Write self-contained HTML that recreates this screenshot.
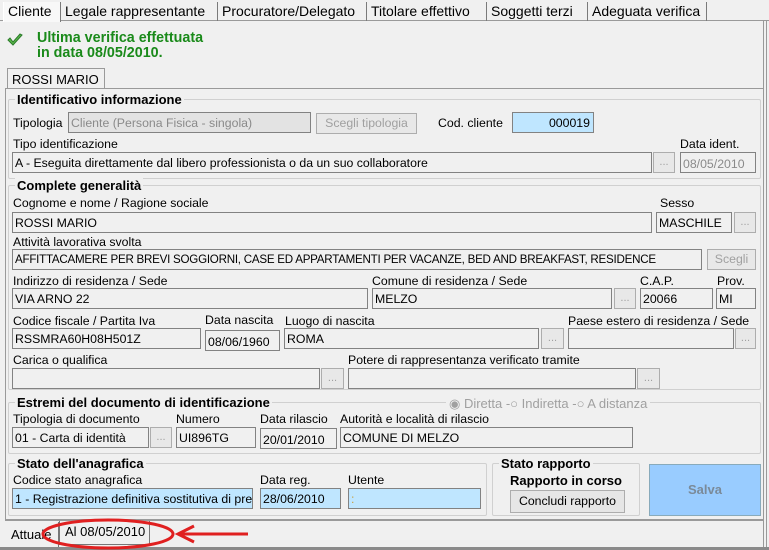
<!DOCTYPE html>
<html><head><meta charset="utf-8">
<style>
*{box-sizing:border-box;margin:0;padding:0}
body{width:769px;height:550px;background:#f0f0f0;font-family:"Liberation Sans",sans-serif;font-size:12.3px;color:#000;position:relative;overflow:hidden}
.a{position:absolute;white-space:nowrap}
.l{position:absolute;white-space:nowrap;font-size:12.3px}
.i{position:absolute;border:1px solid #828282;background:#f0f0f0;height:21px;padding:3px 0 0 2px;white-space:nowrap;overflow:hidden;font-size:12.3px}
.blue{background:#bfe6ff}
.dis{background:#e3e3e3;color:#8a8a8a}
.b{position:absolute;border:1px solid #adadad;background:#e8e8e8;height:21px;text-align:center;color:#a0a0a0;font-size:11px;line-height:18px}
.g{position:absolute;border:1px solid #d0d0d0;border-radius:2px}
.gt{position:absolute;font-weight:bold;background:#f0f0f0;padding:0 2px;font-size:13px;white-space:nowrap}
.tab{position:absolute;top:2px;height:19px;border-right:1px solid #7a7a7a;padding:1px 4px;font-size:14px;white-space:nowrap}
</style></head><body>
<div class="a" style="left:0;top:20px;width:769px;border-top:1px solid #9a9a9a"></div>
<div class="tab" style="left:3px;width:58px;background:#f8f8f8;border-left:1px solid #fff;height:20px">Cliente</div>
<div class="tab" style="left:61px;width:157px">Legale rappresentante</div>
<div class="tab" style="left:218px;width:149px">Procuratore/Delegato</div>
<div class="tab" style="left:367px;width:120px">Titolare effettivo</div>
<div class="tab" style="left:487px;width:101px">Soggetti terzi</div>
<div class="tab" style="left:588px;width:119px">Adeguata verifica</div>
<div class="a" style="left:763px;top:20px;width:4px;height:530px;border-left:1px solid #999;border-right:1px solid #999"></div>
<div class="a" style="left:0;top:547px;width:769px;height:3px;background:#8a8a8a"></div>
<svg class="a" style="left:7px;top:33px" width="16" height="14" viewBox="0 0 16 14"><path d="M1 7 L6 12 L15 2 L13 1 L6 9 L3 5 Z" fill="#5cb84a" stroke="#2a7a2a" stroke-width="1"/></svg>
<div class="a" style="left:37px;top:31px;color:#1a8a1a;font-weight:bold;font-size:14.3px;line-height:15px">Ultima verifica effettuata<br>in data 08/05/2010.</div>
<div class="a" style="left:7px;top:68px;width:98px;height:21px;border:1px solid #9a9a9a;border-bottom:none;background:#f0f0f0;padding:3px 4px;font-size:13px">ROSSI MARIO</div>
<div class="a" style="left:5px;top:88px;width:758px;height:432px;border:1px solid #9a9a9a;border-right:none"></div>
<div class="a" style="left:104px;top:88px;width:659px;border-top:1px solid #9a9a9a"></div>

<div class="g" style="left:8px;top:99px;width:753px;height:80px"></div>
<div class="gt" style="left:15px;top:92px">Identificativo informazione</div>
<div class="l" style="left:13px;top:116px">Tipologia</div>
<div class="i dis" style="left:68px;top:112px;width:243px">Cliente (Persona Fisica - singola)</div>
<div class="b" style="left:316px;top:113px;width:101px;font-size:12.3px">Scegli tipologia</div>
<div class="l" style="left:438px;top:116px">Cod. cliente</div>
<div class="i blue" style="left:512px;top:112px;width:82px;text-align:right;padding-right:3px">000019</div>
<div class="l" style="left:13px;top:137px">Tipo identificazione</div>
<div class="i" style="left:12px;top:152px;width:640px">A - Eseguita direttamente dal libero professionista o da un suo collaboratore</div>
<div class="b" style="left:653px;top:152px;width:22px">...</div>
<div class="l" style="left:680px;top:137px">Data ident.</div>
<div class="i" style="left:680px;top:152px;width:76px;color:#8a8a8a;padding-top:4px">08/05/2010</div>

<div class="g" style="left:8px;top:185px;width:753px;height:205px"></div>
<div class="gt" style="left:15px;top:178px">Complete generalità</div>
<div class="l" style="left:13px;top:196px">Cognome e nome / Ragione sociale</div>
<div class="i" style="left:12px;top:212px;width:640px">ROSSI MARIO</div>
<div class="l" style="left:660px;top:196px">Sesso</div>
<div class="i" style="left:656px;top:212px;width:76px">MASCHILE</div>
<div class="b" style="left:734px;top:212px;width:22px">...</div>
<div class="l" style="left:13px;top:235px">Attività lavorativa svolta</div>
<div class="i" style="left:12px;top:249px;width:690px;font-size:11.6px;letter-spacing:-0.25px">AFFITTACAMERE PER BREVI SOGGIORNI, CASE ED APPARTAMENTI PER VACANZE, BED AND BREAKFAST, RESIDENCE</div>
<div class="b" style="left:707px;top:249px;width:49px;font-size:12.3px">Scegli</div>
<div class="l" style="left:13px;top:274px">Indirizzo di residenza / Sede</div>
<div class="i" style="left:12px;top:288px;width:356px">VIA ARNO 22</div>
<div class="l" style="left:372px;top:274px">Comune di residenza / Sede</div>
<div class="i" style="left:372px;top:288px;width:240px">MELZO</div>
<div class="b" style="left:614px;top:288px;width:22px">...</div>
<div class="l" style="left:640px;top:274px">C.A.P.</div>
<div class="i" style="left:640px;top:288px;width:73px">20066</div>
<div class="l" style="left:717px;top:274px">Prov.</div>
<div class="i" style="left:716px;top:288px;width:40px">MI</div>
<div class="l" style="left:13px;top:314px">Codice fiscale / Partita Iva</div>
<div class="i" style="left:12px;top:328px;width:189px">RSSMRA60H08H501Z</div>
<div class="l" style="left:205px;top:313px">Data nascita</div>
<div class="i" style="left:205px;top:330px;width:75px;padding-top:4px">08/06/1960</div>
<div class="l" style="left:285px;top:314px">Luogo di nascita</div>
<div class="i" style="left:284px;top:328px;width:255px">ROMA</div>
<div class="b" style="left:541px;top:328px;width:23px">...</div>
<div class="l" style="left:568px;top:314px">Paese estero di residenza / Sede</div>
<div class="i" style="left:568px;top:328px;width:166px"></div>
<div class="b" style="left:735px;top:328px;width:21px">...</div>
<div class="l" style="left:13px;top:353px">Carica o qualifica</div>
<div class="i" style="left:12px;top:368px;width:308px"></div>
<div class="b" style="left:321px;top:368px;width:23px">...</div>
<div class="l" style="left:348px;top:353px">Potere di rappresentanza verificato tramite</div>
<div class="i" style="left:348px;top:368px;width:288px"></div>
<div class="b" style="left:637px;top:368px;width:23px">...</div>

<div class="g" style="left:8px;top:402px;width:753px;height:52px"></div>
<div class="gt" style="left:15px;top:395px">Estremi del documento di identificazione</div>
<div class="a" style="left:446px;top:396px;background:#f0f0f0;color:#a0a0a0;padding:0 3px;font-size:13px">◉ Diretta -○ Indiretta -○ A distanza</div>
<div class="l" style="left:13px;top:412px">Tipologia di documento</div>
<div class="i" style="left:12px;top:427px;width:137px">01 - Carta di identità</div>
<div class="b" style="left:150px;top:427px;width:22px">...</div>
<div class="l" style="left:176px;top:412px">Numero</div>
<div class="i" style="left:176px;top:427px;width:80px">UI896TG</div>
<div class="l" style="left:260px;top:412px">Data rilascio</div>
<div class="i" style="left:260px;top:428px;width:77px;padding-top:4px">20/01/2010</div>
<div class="l" style="left:340px;top:412px">Autorità e località di rilascio</div>
<div class="i" style="left:340px;top:427px;width:293px">COMUNE DI MELZO</div>

<div class="g" style="left:8px;top:463px;width:479px;height:53px"></div>
<div class="gt" style="left:15px;top:456px">Stato dell'anagrafica</div>
<div class="l" style="left:13px;top:473px">Codice stato anagrafica</div>
<div class="i blue" style="left:12px;top:488px;width:241px">1 - Registrazione definitiva sostitutiva di pre</div>
<div class="l" style="left:260px;top:473px">Data reg.</div>
<div class="i blue" style="left:260px;top:488px;width:81px">28/06/2010</div>
<div class="l" style="left:348px;top:473px">Utente</div>
<div class="i blue" style="left:348px;top:488px;width:133px;color:#c8a040">:</div>

<div class="g" style="left:492px;top:463px;width:148px;height:53px"></div>
<div class="gt" style="left:499px;top:456px">Stato rapporto</div>
<div class="a" style="left:492px;top:473px;width:148px;text-align:center;font-weight:bold;font-size:13px">Rapporto in corso</div>
<div class="b" style="left:510px;top:490px;width:115px;height:23px;color:#000;font-size:12.3px;line-height:21px;background:#e6e6e6">Concludi rapporto</div>

<div class="a" style="left:649px;top:464px;width:112px;height:52px;background:#99ccff;border:1px solid #8ab;text-align:center;line-height:50px;font-weight:bold;color:#7a8a99;font-size:13px">Salva</div>

<div class="a" style="left:5px;top:520px;width:758px;border-top:1px solid #9a9a9a"></div>
<div class="a" style="left:8px;top:522px;width:51px;height:25px;padding:5px 3px;font-size:13px;border-right:1px solid #777">Attuale</div>
<div class="a" style="left:59px;top:521px;width:91px;height:24px;padding:3px 5px;font-size:13px;border:1px solid #777;border-top:none;background:#f0f0f0">Al 08/05/2010</div>
<svg class="a" style="left:0;top:510px" width="260" height="40"><ellipse cx="108" cy="24" rx="65" ry="14" fill="none" stroke="#e02020" stroke-width="3"/><path d="M248 24 L180 24 M194 16 L178 24 L194 32" fill="none" stroke="#e02020" stroke-width="3"/></svg>
</body></html>
